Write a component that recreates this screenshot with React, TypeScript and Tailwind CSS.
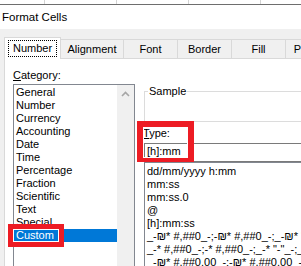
export default function App() {
  const cats = [
    "General",
    "Number",
    "Currency",
    "Accounting",
    "Date",
    "Time",
    "Percentage",
    "Fraction",
    "Scientific",
    "Text",
    "Special",
    "Custom",
  ];
  const types = [
    "dd/mm/yyyy h:mm",
    "mm:ss",
    "mm:ss.0",
    "@",
    "[h]:mm:ss",
    '_-₪* #,##0_-;-₪* #,##0_-;_-₪* "-"_-;_-@_-',
    '_-* #,##0_-;-* #,##0_-;_-* "-"_-;_-@_-',
    '_-₪* #,##0.00_-;-₪* #,##0.00_-;_-₪* "-"??_-;_-@_-',
  ];
  const tabs = [
    { label: "Alignment", w: "w-[63px]" },
    { label: "Font", w: "w-[54px]" },
    { label: "Border", w: "w-[54px]" },
    { label: "Fill", w: "w-[54px]" },
    { label: "Protection", w: "w-[66px]" },
  ];
  return (
    <div className="w-[301px] h-[266px] overflow-hidden relative bg-[#f0f0f0] text-black text-[11px] leading-[13px] font-['Liberation_Sans','DejaVu_Sans',sans-serif]">
      {/* spreadsheet strip behind */}
      <div className="h-[4px] bg-white flex">
        <div className="w-[45px] shrink-0 border-r border-[#d4d4d4]" />
        <div className="w-[72px] shrink-0 border-r border-[#d4d4d4]" />
        <div className="w-[72px] shrink-0 border-r border-[#d4d4d4]" />
        <div className="w-[72px] shrink-0 border-r border-[#d4d4d4]" />
      </div>
      <div className="h-px bg-[#6e6e6e]" />
      {/* title bar */}
      <div className="h-[24px] bg-white pl-[2px] text-[11.5px] leading-[24px]">Format Cells</div>
      {/* body */}
      <div className="pt-[8px]">
        <div className="relative z-10 flex items-end h-[21px] pl-[4px]">
          <div className="w-[57px] h-[22px] -mb-px shrink-0 bg-white border border-b-0 border-[#d9d9d9] flex justify-center pt-[2px]">
            <span className="h-[17px] px-[4px] leading-[15px] border border-dotted border-black">Number</span>
          </div>
          {tabs.map((t) => (
            <div
              key={t.label}
              className={`${t.w} h-[19px] shrink-0 border-t border-r border-[#d9d9d9] text-center leading-[18px] overflow-hidden whitespace-nowrap`}
            >
              {t.label}
            </div>
          ))}
        </div>
        <div className="ml-[4px] h-[300px] bg-white border-t border-l border-[#d9d9d9] flex pl-[8px] pt-[10px]">
          {/* left column */}
          <div className="w-[122px] shrink-0">
            <div className="h-[13px]">
              <span className="underline">C</span>ategory:
            </div>
            <div className="mt-[2px] h-[200px] border border-[#828790] flex">
              <div className="w-[103px] pt-[1px]">
                {cats.map((c) => (
                  <div
                    key={c}
                    className={`h-[13px] pl-[2px] ${c === "Custom" ? "bg-[#0078d7] text-white" : ""}`}
                  >
                    {c}
                  </div>
                ))}
              </div>
              <div className="w-[17px] bg-[#f0f0f0]">
                <div className="h-[17px] flex items-center justify-center">
                  <svg width="9" height="6" viewBox="0 0 9 6">
                    <path d="M1 5 L4.5 1.5 L8 5" fill="none" stroke="#a6a6a6" strokeWidth="1.6" />
                  </svg>
                </div>
              </div>
            </div>
          </div>
          {/* right column */}
          <div className="ml-[8px] w-[200px] shrink-0">
            <div className="mt-[22px] ml-[1px] h-[31px] border border-[#dcdcdc] relative">
              <span className="absolute left-[3px] top-[-7px] bg-white px-[1px]">Sample</span>
            </div>
            <div className="mt-[5px] h-[13px]">
              <span className="underline">T</span>ype:
            </div>
            <div className="mt-[3px] ml-[1px] h-[19px] border border-[#7a7a7a] pl-[2px] leading-[15px]">
              [h]:mm
            </div>
            <div className="ml-[1px] h-[200px] border border-[#828790] pt-[2px] pl-[2px]">
              {types.map((t) => (
                <div key={t} className="h-[13px] whitespace-nowrap">
                  {t}
                </div>
              ))}
            </div>
          </div>
        </div>
      </div>
      {/* red annotation boxes */}
      <div className="absolute left-[137px] top-[121px] w-[57px] h-[41px] border-[6px] border-b-[4px] border-[#ed1c24] shadow-[inset_0_0_0_1px_#fff]" />
      <div className="absolute left-[8px] top-[224px] w-[56px] h-[23px] border-[5px] border-[#ed1c24] shadow-[inset_0_0_0_1px_#fff]" />
    </div>
  );
}
